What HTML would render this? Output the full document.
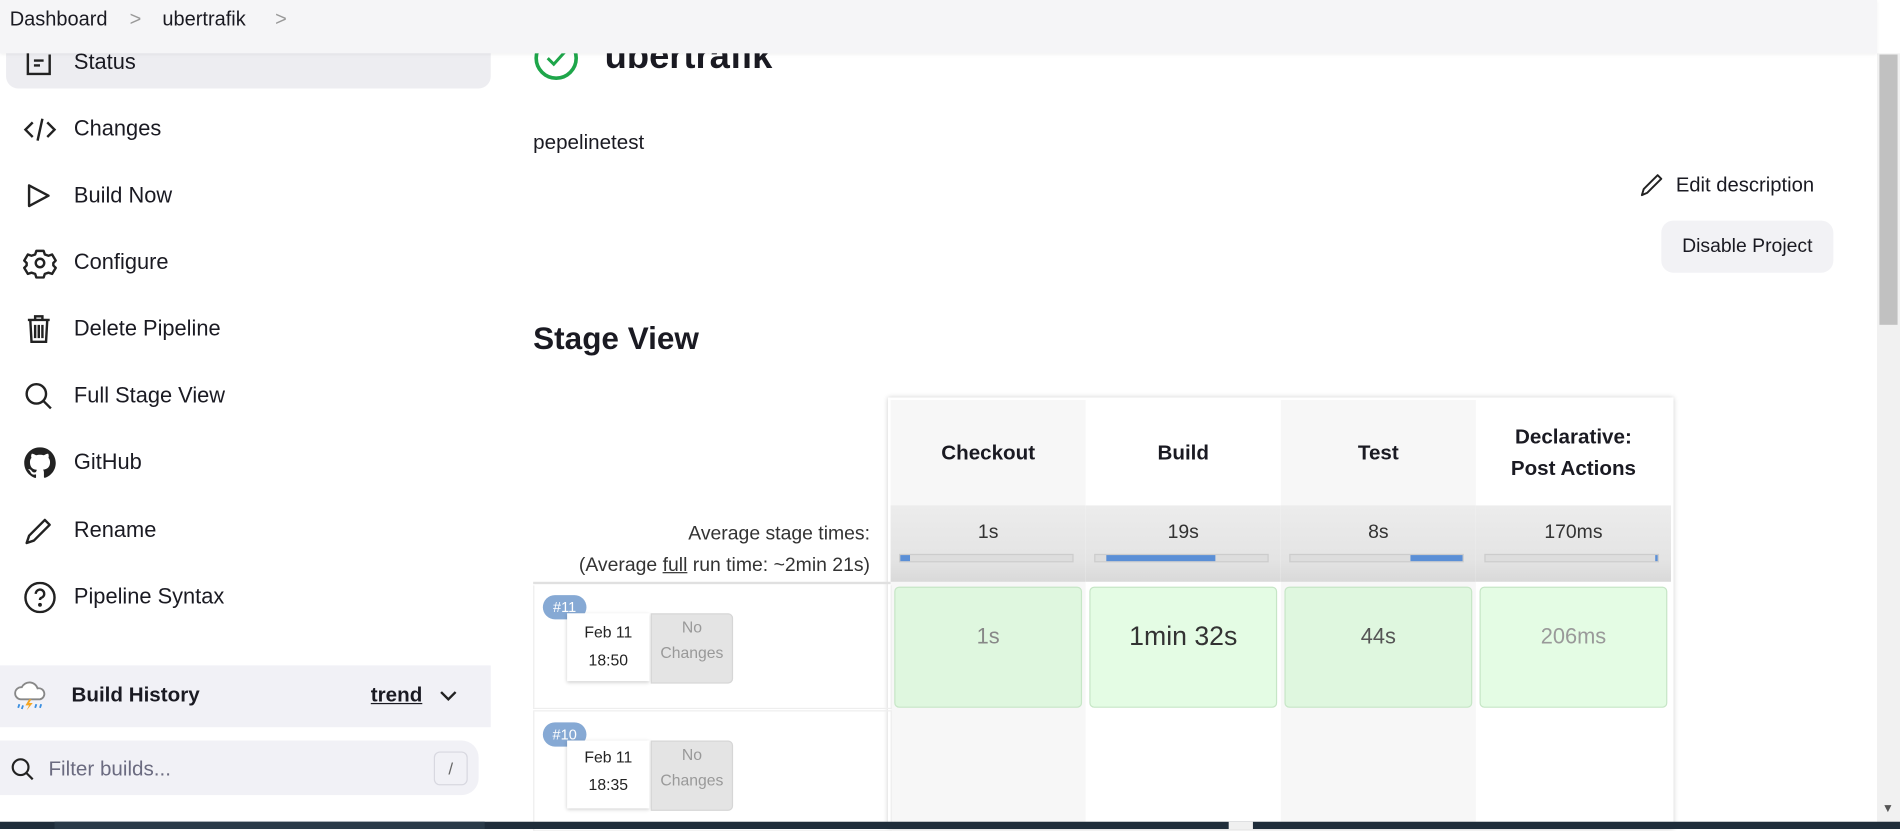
<!DOCTYPE html>
<html><head><meta charset="utf-8"><style>
html,body{margin:0;padding:0;width:1900px;height:829px;overflow:hidden;background:#fff}
#w{position:absolute;left:0;top:0;width:1568px;height:684px;transform:scale(1.21173,1.2120);transform-origin:0 0;font-family:"Liberation Sans",sans-serif;color:#1a1a22}
.a{position:absolute}
.hdr{left:0;top:0;width:1549px;height:44px;background:#f5f5f7;box-shadow:0 1px 3px rgba(0,0,0,.06);z-index:5}
.hdr span{position:absolute;top:7px;font-size:16.5px;white-space:nowrap}
.item{position:absolute;left:0;width:405px;height:46px}
.item svg{position:absolute;left:19px;top:11px}
.item span{position:absolute;left:61px;top:13px;font-size:18px}
.col{position:absolute;top:330px;width:161px;height:350px}
.hc{position:absolute;top:0;width:161px;height:87px;display:flex;align-items:center;justify-content:center;text-align:center;font-weight:bold;font-size:17px;line-height:26px}
.av{position:absolute;top:87px;width:161px;height:63px;background:linear-gradient(#ececec,#e4e4e4 70%,#d9d9d9)}
.av .t{position:absolute;top:14px;width:100%;text-align:center;font-size:16px;color:#333}
.bar{position:absolute;left:7px;top:40px;width:142px;height:5px;background:#ddd;border:1px solid #ccc}
.bar i{position:absolute;top:0;height:5px;background:#5b8fd6}
.cell{position:absolute;top:154px;left:3px;width:155px;height:100px;box-sizing:border-box;padding-bottom:18px;background:#dff7df;border:1px solid #c6e6c6;border-radius:4px;display:flex;align-items:center;justify-content:center;font-size:18px}
.bn{position:absolute;left:448px;width:36px;height:20px;border-radius:10px;background:#86a9d4;color:#fff;font-size:12px;text-align:center;line-height:20px}
.dt{position:absolute;left:468px;width:68px;height:56px;background:#fff;box-shadow:0 1px 3px rgba(0,0,0,.2);font-size:13px;text-align:center;color:#222}
.nc{position:absolute;left:537px;width:66px;height:56px;background:#e4e4e4;border:1px solid #d6d6d6;border-radius:0 4px 4px 0;font-size:13px;text-align:center;color:#999;line-height:21px}
</style></head><body><div id="w">
<div class="a hdr"><span style="left:8px">Dashboard</span><span style="left:107px;color:#999">&gt;</span><span style="left:134px">ubertrafik</span><span style="left:227px;color:#999">&gt;</span></div>

<div class="a" style="left:5px;top:28px;width:400px;height:45px;background:#ededf1;border-radius:10px"></div>
<div class="item" style="top:28px"><svg width="26" height="26" viewBox="0 0 26 26" fill="none" stroke="#222" stroke-width="2"><path d="M4 4v18h18V6"/><path d="M9 11h8M9 15h5"/></svg><span>Status</span></div>
<div class="item" style="top:83px"><svg width="28" height="26" viewBox="0 0 28 26" fill="none" stroke="#222" stroke-width="2"><path d="M8 7l-6 6 6 6M20 7l6 6-6 6M16 4l-4 18"/></svg><span>Changes</span></div>
<div class="item" style="top:138px"><svg width="26" height="26" viewBox="0 0 26 26" fill="none" stroke="#222" stroke-width="2"><path d="M5 4v17l16-8.5z" stroke-linejoin="round"/></svg><span>Build Now</span></div>
<div class="item" style="top:193px"><svg width="28" height="26" viewBox="0 0 28 26" fill="none" stroke="#222" stroke-width="2"><path d="M11 3h6l1 3 3 1 3-1 3 5-2 2v2l2 2-3 5-3-1-3 1-1 3h-6l-1-3-3-1-3 1-3-5 2-2v-2l-2-2 3-5 3 1 3-1z" stroke-linejoin="round"/><circle cx="14" cy="13" r="3.5"/></svg><span>Configure</span></div>
<div class="item" style="top:248px"><svg width="26" height="26" viewBox="0 0 26 26" fill="none" stroke="#222" stroke-width="2"><path d="M4 5h18M10 5V2h6v3M6 5l1 18h12l1-18M10 9v11M13 9v11M16 9v11"/></svg><span>Delete Pipeline</span></div>
<div class="item" style="top:303px"><svg width="26" height="26" viewBox="0 0 26 26" fill="none" stroke="#222" stroke-width="2"><circle cx="11" cy="11" r="8"/><path d="M17 17l6 6"/></svg><span>Full Stage View</span></div>
<div class="item" style="top:358px"><svg width="28" height="26" viewBox="0 0 16 16"><path fill="#222" d="M8 0C3.6 0 0 3.6 0 8c0 3.5 2.3 6.5 5.5 7.600.4.1.5-.2.5-.4v-1.4c-2.2.5-2.7-1-2.7-1-.4-.9-.9-1.2-.9-1.2-.7-.5.1-.5.1-.5.8.1 1.2.8 1.2.8.7 1.3 1.9.9 2.3.7.1-.5.3-.9.5-1.1-1.800-.2-3.600-.9-3.600-4 0-.9.3-1.6.8-2.1-.1-.2-.4-1 .1-2.1 0 0 .7-.2 2.2.8.6-.2 1.3-.3 2-.3s1.4.1 2 .3c1.5-1 2.2-.8 2.2-.8.4 1.1.2 1.9.1 2.1.5.6.8 1.3.8 2.1 0 3.1-1.9 3.7-3.6 3.9.3.3.5.8.5 1.5v2.2c0 .2.1.5.6.4C13.7 14.5 16 11.5 16 8c0-4.4-3.6-8-8-8z"/></svg><span>GitHub</span></div>
<div class="item" style="top:414px"><svg width="28" height="26" viewBox="0 0 28 26" fill="none" stroke="#222" stroke-width="2"><path d="M3 23l2-6L18 4l4 4L9 21z" stroke-linejoin="round"/></svg><span>Rename</span></div>
<div class="item" style="top:469px"><svg width="28" height="26" viewBox="0 0 28 26" fill="none" stroke="#222" stroke-width="2"><circle cx="14" cy="13" r="12"/><path d="M10.5 10a3.5 3.5 0 1 1 4.5 3.3c-.7.3-1 .8-1 1.7"/><circle cx="14" cy="19" r=".6" fill="#222"/></svg><span>Pipeline Syntax</span></div>

<div class="a" style="left:0;top:549px;width:405px;height:51px;background:#f1f1f6"></div>
<svg class="a" style="left:10px;top:560px" width="30" height="28" viewBox="0 0 30 28"><path d="M7 17a5 5 0 0 1 1-10 7 7 0 0 1 13 1 4.5 4.5 0 0 1 2 9z" fill="#fff" stroke="#888" stroke-width="1.5"/><path d="M14 17l-3 5h3l-2 4 5-6h-3l2-3z" fill="#f5a623"/><path d="M6 21l-1 3M9 22l-1 3M20 21l-1 3M24 21l-1 3" stroke="#3b8fe0" stroke-width="1.5"/></svg>
<div class="a" style="left:59px;top:564px;font-size:17px;font-weight:bold">Build History</div>
<div class="a" style="left:306px;top:564px;font-size:17px;font-weight:bold;text-decoration:underline">trend</div>
<svg class="a" style="left:362px;top:568px" width="16" height="12" viewBox="0 0 16 12" fill="none" stroke="#222" stroke-width="2"><path d="M2 3l6 6 6-6"/></svg>
<div class="a" style="left:0;top:611px;width:395px;height:45px;background:#f1f1f6;border-radius:0 14px 14px 0"></div>
<svg class="a" style="left:8px;top:624px" width="22" height="22" viewBox="0 0 22 22" fill="none" stroke="#222" stroke-width="1.8"><circle cx="9" cy="9" r="6.5"/><path d="M14 14l5 5"/></svg>
<div class="a" style="left:40px;top:625px;font-size:17px;color:#6b6b80">Filter builds...</div>
<div class="a" style="left:358px;top:620px;width:26px;height:26px;border:1px solid #d8d8e0;border-radius:5px;text-align:center;line-height:26px;color:#666;font-size:14px">/</div>

<svg class="a" style="left:440px;top:29px;z-index:1" width="38" height="38" viewBox="0 0 38 38" fill="none" stroke="#1ea64a" stroke-width="3"><circle cx="19" cy="19" r="16.5"/><path d="M12 19l5 5 9-10" stroke-width="2.5"/></svg>
<div class="a" style="left:499px;top:30px;font-size:30px;font-weight:bold">ubertrafik</div>
<div class="a" style="left:440px;top:108px;font-size:17px">pepelinetest</div>
<svg class="a" style="left:1352px;top:141px" width="22" height="22" viewBox="0 0 22 22" fill="none" stroke="#222" stroke-width="1.6"><path d="M3 20l1.5-5L16 3.5l3 3L7.5 18z" stroke-linejoin="round"/></svg>
<div class="a" style="left:1383px;top:143px;font-size:16.7px">Edit description</div>
<div class="a" style="left:1371px;top:182px;width:142px;height:43px;background:#f2f2f5;border-radius:10px;font-size:16px;text-align:center;line-height:44px">Disable Project</div>
<div class="a" style="left:440px;top:264px;font-size:26px;font-weight:bold">Stage View</div>

<div>
<div class="a" style="left:733px;top:328px;width:648px;height:356px;box-shadow:0 0 4px rgba(0,0,0,.2)"></div>
<div class="col" style="left:735px;background:#f7f7f7"><div class="hc">Checkout</div><div class="av"><div class="t">1s</div><div class="bar"><i style="left:0;width:8px"></i></div></div><div class="cell" style="color:#888">1s</div></div>
<div class="col" style="left:896px;background:#fff"><div class="hc">Build</div><div class="av"><div class="t">19s</div><div class="bar"><i style="left:9px;width:90px"></i></div></div><div class="cell" style="background:#e4fce4;font-size:22px;color:#333">1min 32s</div></div>
<div class="col" style="left:1057px;background:#f7f7f7"><div class="hc">Test</div><div class="av"><div class="t">8s</div><div class="bar"><i style="left:99px;width:43px"></i></div></div><div class="cell" style="color:#555">44s</div></div>
<div class="col" style="left:1218px;background:#fff"><div class="hc">Declarative:<br>Post Actions</div><div class="av"><div class="t">170ms</div><div class="bar"><i style="left:140px;width:2px"></i></div></div><div class="cell" style="background:#e4fce4;color:#999">206ms</div></div>

<div class="a" style="left:440px;top:428px;width:278px;text-align:right;font-size:16px;line-height:26px;color:#333">Average stage times:<br>(Average <u>full</u> run time: ~2min 21s)</div>
<div class="a" style="left:440px;top:480px;width:295px;height:2px;background:#e0e0e0"></div>
<div class="a" style="left:440px;top:483px;width:294px;height:101px;border:1px solid #eee;border-top:none"></div>
<div class="a" style="left:440px;top:586px;width:294px;height:98px;border:1px solid #eee"></div>
<div class="bn" style="top:491px">#11</div>
<div class="dt" style="top:506px"><div style="margin-top:8px">Feb 11</div><div style="margin-top:8px">18:50</div></div>
<div class="nc" style="top:506px">No<br>Changes</div>
<div class="bn" style="top:596px">#10</div>
<div class="dt" style="top:611px"><div style="margin-top:6px">Feb 11</div><div style="margin-top:8px">18:35</div></div>
<div class="nc" style="top:611px">No<br>Changes</div>
</div>

<div class="a" style="left:1549px;top:44px;width:19px;height:640px;background:#f1f1f1"></div>
<div class="a" style="left:1551px;top:45px;width:15px;height:223px;background:#c1c1c1"></div>
<div class="a" style="left:1553px;top:662px;font-size:10px;color:#555">▼</div>
<div class="a" style="left:0;top:678px;width:1568px;height:6px;background:#1f2d3a"></div>
<div class="a" style="left:45px;top:678px;width:355px;height:6px;background:#2a3a48"></div>
<div class="a" style="left:1014px;top:678px;width:20px;height:6px;background:#f0f0f0"></div>
</div></body></html>
